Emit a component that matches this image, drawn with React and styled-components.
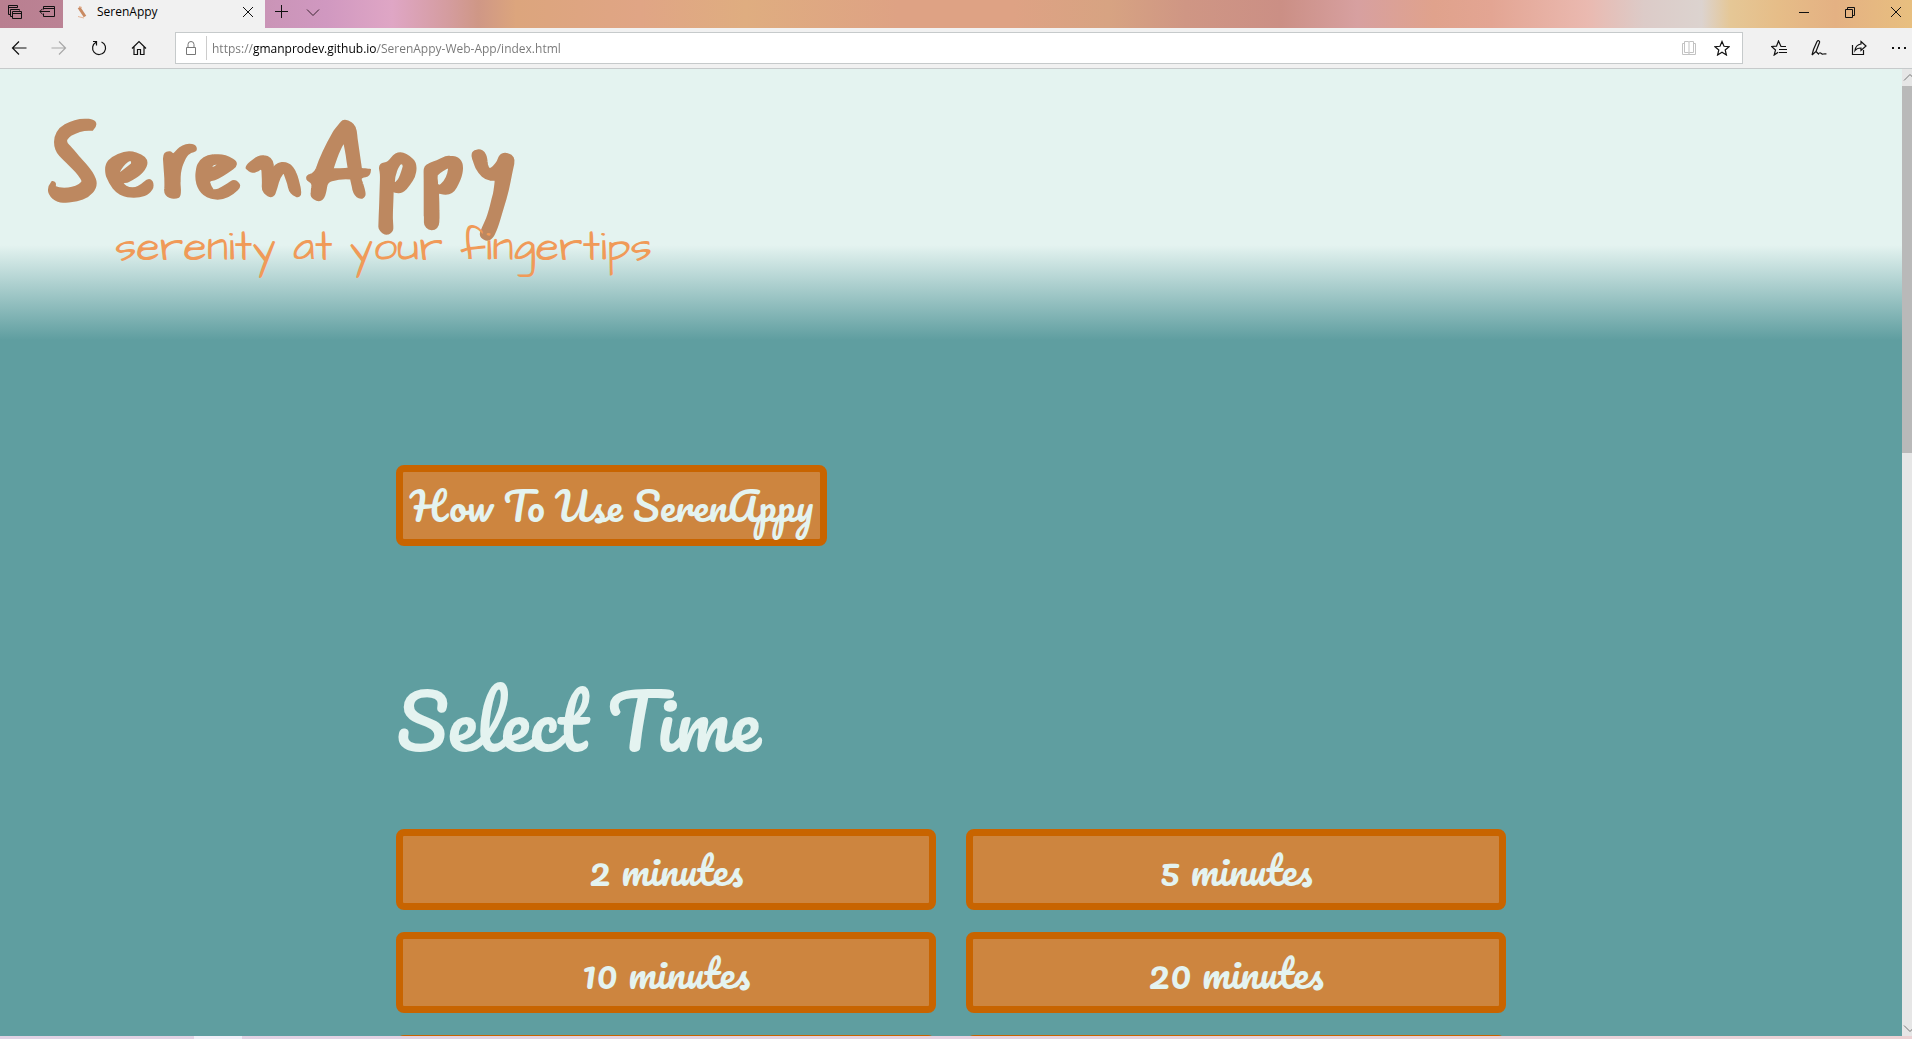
import React from "react";
import styled, { createGlobalStyle } from "styled-components";

const uiFont = `"Segoe UI", "Open Sans", "Noto Sans", sans-serif`;
const scriptFont = `Pacifico, Lato, cursive`;
const brandFont = `Mansalva, "Caveat Brush", Lato, cursive`;
const handFont = `"Architects Daughter", Lato, cursive`;

const GlobalStyle = createGlobalStyle`
  *, *::before, *::after { box-sizing: border-box; }
  body { margin: 0; overflow: hidden; }
  button { cursor: pointer; }
`;

const Window = styled.div`
  height: 100vh;
  display: flex;
  flex-direction: column;
  overflow: hidden;
  font-family: ${uiFont};
`;

/* ---------- browser chrome ---------- */

const TabStrip = styled.header`
  flex: none;
  height: 28px;
  display: flex;
  background: linear-gradient(
    90deg,
    #b97f90 0%, #bb8294 3%, #c893b4 13%, #d098c0 17%, #dfa6c5 20.5%,
    #d49c9e 23.5%, #cf9786 25%, #dca57d 27%, #e0a585 33.5%, #dfad80 39%,
    #dea284 47%, #dea284 53%, #d7a382 58%, #cf9684 62%, #cb8f85 67%,
    #d7a0a0 71%, #e0a28c 75%, #e3a593 78%, #eab9b0 83%, #dccbc8 86%,
    #dcd3cf 89%, #e5c796 90.5%, #e6bd88 93%, #e4b183 96%, #e8bf7f 100%
  );
`;

const StripTools = styled.div`
  width: 63px;
  display: flex;
  align-items: center;
  justify-content: space-between;
  padding: 0 8px 4px 7px;
`;

const IconButton = styled.button`
  display: flex;
  align-items: center;
  justify-content: center;
  flex: none;
  width: 16px;
  height: ${(p) => p.$height || 16}px;
  padding: 0;
  border: 0;
  background: none;
  color: ${(p) => p.$color || "#111111"};
`;

const Tab = styled.div`
  width: 202px;
  display: flex;
  align-items: center;
  gap: 9px;
  padding: 0 9px 4px 12px;
  background: #f1f1f1;
  font-size: 12px;
  line-height: 16px;
  color: #000000;
`;

const TabTitle = styled.span`
  flex: 1;
`;

const StripActions = styled.div`
  display: flex;
  align-items: center;
  gap: 16px;
  padding: 0 8px 4px 8px;
`;

const WindowControls = styled.div`
  display: flex;
  align-items: center;
  gap: 30px;
  margin-left: auto;
  padding: 0 8px 4px 0;
`;

const Toolbar = styled.nav`
  flex: none;
  height: 41px;
  display: flex;
  align-items: center;
  background: #f1f1f1;
  border-bottom: 1px solid #c6cacb;
`;

const NavButtons = styled.div`
  display: flex;
  gap: 24px;
  padding-left: 11px;
`;

const AddressBar = styled.div`
  flex: 1;
  height: 32px;
  display: flex;
  align-items: center;
  margin-left: 28px;
  padding-left: 7px;
  padding-right: 12px;
  background: #ffffff;
  border: 1px solid #c6cacb;
`;

const Divider = styled.span`
  width: 1px;
  height: 24px;
  margin: 0 5px 0 7px;
  background: #cccccc;
`;

const AddressInput = styled.input`
  flex: 1;
  min-width: 0;
  height: 24px;
  padding: 1px 0 0;
  border: 0;
  outline: 0;
  font-family: ${uiFont};
  font-size: 12px;
  line-height: 23px;
  background: linear-gradient(90deg, #767676 41px, #000000 41px, #000000 165px, #767676 165px);
  background-clip: text;
  -webkit-background-clip: text;
  -webkit-text-fill-color: transparent;
`;

const AddressActions = styled.div`
  display: flex;
  gap: 17px;
`;

const BrowserActions = styled.div`
  display: flex;
  gap: 24px;
  padding: 0 5px 0 28px;
`;

const Viewport = styled.div`
  flex: 1;
  min-height: 0;
  display: flex;
`;

const Scrollbar = styled.div`
  flex: none;
  width: 10px;
  display: flex;
  flex-direction: column;
  overflow: hidden;
  background: #e6e6e6;
`;

const ScrollThumb = styled.div`
  height: 38%;
  margin-bottom: auto;
  background: #b9b9b9;
`;

const Taskbar = styled.footer`
  flex: none;
  height: 3px;
  padding-left: 194px;
  background: linear-gradient(90deg, #e0d2e4, #e6d2e2 50%, #ecd2d4);
`;

const TaskbarItem = styled.div`
  width: 48px;
  height: 3px;
  background: #f1eff8;
`;

/* ---------- page ---------- */

const Page = styled.div`
  flex: 1;
  min-width: 0;
  overflow: hidden;
  background: #5f9ea0;
`;

const Masthead = styled.div`
  height: 271px;
  padding: 42px 46px 0;
  background: linear-gradient(#e4f3f0 65%, #5f9ea0 100%);
`;

const Brand = styled.h1`
  margin: 0;
  font-family: ${brandFont};
  font-weight: 700;
  font-size: 105px;
  line-height: 104px;
  color: #bd8860;
`;

const Tagline = styled.p`
  margin: 9px 0 0 69px;
  font-family: ${handFont};
  font-size: 43px;
  line-height: 48px;
  color: #f09a58;
`;

const Content = styled.main`
  max-width: 1110px;
  margin: 0 auto;
  padding-top: 125px;
`;

const PageButton = styled.button`
  height: 81px;
  padding: 0 7px;
  border: 7px solid #c86400;
  border-radius: 8px;
  background: #cd853f;
  font-family: ${scriptFont};
  font-size: 39px;
  font-weight: 400;
  line-height: 48px;
  color: #e4f3f0;
`;

const SectionTitle = styled.h2`
  margin: 127px 0 60px;
  font-family: ${scriptFont};
  font-size: 74px;
  font-weight: 400;
  line-height: 96px;
  color: #e4f3f0;
`;

const TimeGrid = styled.div`
  display: grid;
  grid-template-columns: 1fr 1fr;
  gap: 22px 30px;
`;

/* ---------- icons ---------- */

const Icon = ({ w = 16, h = 16, sw = 1, children }) => (
  <svg width={w} height={h} viewBox={`0 0 ${w} ${h}`} fill="none" stroke="currentColor" strokeWidth={sw} aria-hidden="true">
    {children}
  </svg>
);

const TabsAsideIcon = () => (
  <Icon>
    <path d="M3.5 10.5h-2v-9h9v2M1.5 3.5h9M5.5 12.5h-2v-7h9v1M5.5 7.5h9v7h-9zM5.5 9.5h9" />
  </Icon>
);
const SetAsideIcon = () => (
  <Icon>
    <path d="M4.5 5.5v-3h11v10h-11v-3M4.5 4.5h11M11 7.5H.8M3.5 4.8L.8 7.5l2.7 2.7" />
  </Icon>
);
const Favicon = () => (
  <Icon w={13} h={16}>
    <path d="M4 3.5l6 9" stroke="#c98a62" strokeWidth="3" />
    <path d="M7 3.5L4 2.5M3 12.5l6 1.5" stroke="#e6b596" />
  </Icon>
);
const CloseIcon = () => (
  <Icon w={12} h={12}>
    <path d="M1 1l10 10M11 1L1 11" />
  </Icon>
);
const PlusIcon = () => (
  <Icon>
    <path d="M8.5 1v13M2 7.5h13" />
  </Icon>
);
const ChevronIcon = ({ up }) => (
  <Icon>
    <path d={up ? "M2 10.5l6-6 6 6" : "M2 5.5l6 6 6-6"} />
  </Icon>
);
const MinimizeIcon = () => (
  <Icon>
    <path d="M3 8.5h10" />
  </Icon>
);
const RestoreIcon = () => (
  <Icon>
    <path d="M3.5 5.5h7v8h-7zM5.5 5.5v-2h7v8h-2" />
  </Icon>
);
const BackIcon = () => (
  <Icon>
    <path d="M15.5 8H1.5M8 1.5L1.5 8 8 14.5" strokeWidth="1.2" />
  </Icon>
);
const ForwardIcon = () => (
  <Icon>
    <path d="M.5 8h14M8 1.5L14.5 8 8 14.5" strokeWidth="1.2" />
  </Icon>
);
const RefreshIcon = () => (
  <Icon>
    <path d="M10.5 2A6.5 6.5 0 1 1 5 2.3M2 1.5h3.5v4" strokeWidth="1.2" />
  </Icon>
);
const HomeIcon = () => (
  <Icon>
    <path d="M1 8.5l7-7 7 7M3 7v7.5h3.5v-5h3v5H13V7" strokeWidth="1.2" />
  </Icon>
);
const LockIcon = () => (
  <Icon>
    <path d="M3.5 7.5h9v7h-9zM5 7.5V4.5a3 3 0 0 1 6 0v3" />
  </Icon>
);
const BookIcon = () => (
  <Icon>
    <path d="M3 3.5H1.5v11h13v-11H13M3.5 1.5h4l.5 1 .5-1h4v11h-4l-.5 1-.5-1h-4zM8 2.5v11" />
  </Icon>
);
const StarIcon = () => (
  <Icon>
    <path d="M8 1.5l2 4.8 5 .4-3.8 3.3 1.2 5L8 12.3 3.6 15l1.2-5L1 6.7l5-.4z" strokeWidth="1.2" />
  </Icon>
);
const FavoritesIcon = () => (
  <Icon>
    <path d="M15 6.5h-5L7.5 1 5.5 6.2l-5 .3 4 3.5-1.3 5 4-2.8M8 9.5h8M8 12.5h8" strokeWidth="1.2" />
  </Icon>
);
const PenIcon = () => (
  <Icon>
    <path d="M1 15L2.5 9.5 6 1.5c1-1.5 3-.8 2.5 1L5 11.5 1 15M5 11.5L7.5 14c1.5-2.5 2.5-.5 3.5 0s2-.5 4.5 0" strokeWidth="1.2" />
  </Icon>
);
const ShareIcon = () => (
  <Icon>
    <path d="M1.5 5v9.5h11V10M10 1.5l5 4.5-5 4.5V8C7.5 8 5.5 8.5 4 10.5 4.5 6.5 6.5 4.5 10 4z" strokeWidth="1.2" />
  </Icon>
);
const MoreIcon = () => (
  <Icon>
    <path d="M1 7h2v2H1zM7 7h2v2H7zM13 7h2v2h-2z" fill="currentColor" stroke="none" />
  </Icon>
);

const times = ["2 minutes", "5 minutes", "10 minutes", "20 minutes", "", ""];

export default function App() {
  return (
    <Window>
      <GlobalStyle />
      <TabStrip>
        <StripTools>
          <IconButton aria-label="Tabs you've set aside"><TabsAsideIcon /></IconButton>
          <IconButton aria-label="Set these tabs aside"><SetAsideIcon /></IconButton>
        </StripTools>
        <Tab>
          <Favicon />
          <TabTitle>SerenAppy</TabTitle>
          <IconButton aria-label="Close tab"><CloseIcon /></IconButton>
        </Tab>
        <StripActions>
          <IconButton aria-label="New tab"><PlusIcon /></IconButton>
          <IconButton aria-label="Show tab previews" $color="#3a2430"><ChevronIcon /></IconButton>
        </StripActions>
        <WindowControls>
          <IconButton aria-label="Minimize"><MinimizeIcon /></IconButton>
          <IconButton aria-label="Restore"><RestoreIcon /></IconButton>
          <IconButton aria-label="Close window"><CloseIcon /></IconButton>
        </WindowControls>
      </TabStrip>

      <Toolbar>
        <NavButtons>
          <IconButton aria-label="Back"><BackIcon /></IconButton>
          <IconButton aria-label="Forward" $color="#a8a8a8"><ForwardIcon /></IconButton>
          <IconButton aria-label="Refresh"><RefreshIcon /></IconButton>
          <IconButton aria-label="Home"><HomeIcon /></IconButton>
        </NavButtons>
        <AddressBar>
          <IconButton aria-label="Site information" $color="#777777"><LockIcon /></IconButton>
          <Divider />
          <AddressInput
            aria-label="Address"
            type="text"
            spellCheck={false}
            defaultValue="https://gmanprodev.github.io/SerenAppy-Web-App/index.html"
          />
          <AddressActions>
            <IconButton aria-label="Reading view" $color="#c2c2c2"><BookIcon /></IconButton>
            <IconButton aria-label="Add to favorites"><StarIcon /></IconButton>
          </AddressActions>
        </AddressBar>
        <BrowserActions>
          <IconButton aria-label="Favorites"><FavoritesIcon /></IconButton>
          <IconButton aria-label="Add notes"><PenIcon /></IconButton>
          <IconButton aria-label="Share"><ShareIcon /></IconButton>
          <IconButton aria-label="More"><MoreIcon /></IconButton>
        </BrowserActions>
      </Toolbar>

      <Viewport>
        <Page>
          <Masthead>
            <Brand>SerenAppy</Brand>
            <Tagline>serenity at your fingertips</Tagline>
          </Masthead>
          <Content>
            <PageButton>How To Use SerenAppy</PageButton>
            <SectionTitle>Select Time</SectionTitle>
            <TimeGrid>
              {times.map((t, i) => (
                <PageButton key={i}>{t}</PageButton>
              ))}
            </TimeGrid>
          </Content>
        </Page>
        <Scrollbar>
          <IconButton aria-label="Scroll up" $height={17} $color="#777777"><ChevronIcon up /></IconButton>
          <ScrollThumb />
          <IconButton aria-label="Scroll down" $height={17} $color="#777777"><ChevronIcon /></IconButton>
        </Scrollbar>
      </Viewport>
      <Taskbar>
        <TaskbarItem />
      </Taskbar>
    </Window>
  );
}
